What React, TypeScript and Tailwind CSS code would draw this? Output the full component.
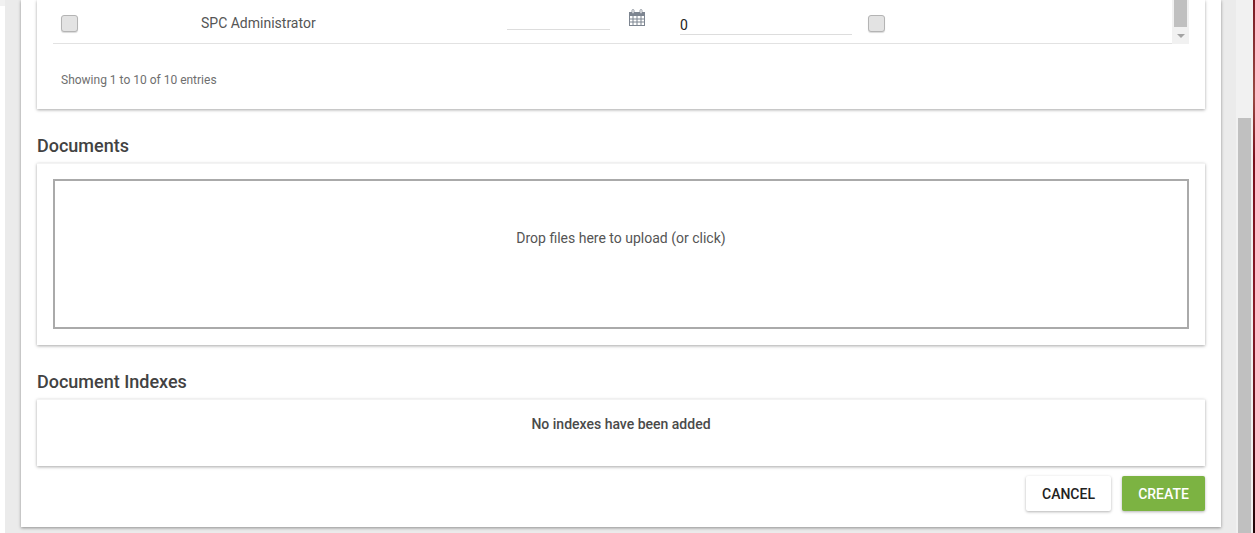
const FONT = "font-['Roboto',sans-serif]";

function Checkbox() {
  return <div className="w-[17px] h-[17px] shrink-0 rounded-[3px] border border-[#b4b4b4] bg-[#e3e3e3] shadow-[0_1px_1px_rgba(0,0,0,0.15)]" />;
}

function CalendarIcon() {
  return (
    <svg width="16" height="17" viewBox="0 0 16 17" className="text-[#7d8590]">
      <rect x="0.5" y="3.5" width="15" height="13" fill="#fff" stroke="currentColor" />
      <rect x="0" y="3" width="16" height="4" fill="currentColor" />
      <path d="M0.5 10h15M0.5 13h15M4 7v9M8 7v9M12 7v9" stroke="currentColor" strokeWidth="1" fill="none" />
      <rect x="3" y="0.5" width="2" height="4" rx="1" fill="#fff" stroke="currentColor" strokeWidth="0.8" />
      <rect x="11" y="0.5" width="2" height="4" rx="1" fill="#fff" stroke="currentColor" strokeWidth="0.8" />
    </svg>
  );
}

function Card({ className, children }: { className: string; children?: React.ReactNode }) {
  return <div className={`bg-white border-t border-[#f3f3f3] shadow-[0_1px_3px_rgba(0,0,0,0.35)] ${className}`}>{children}</div>;
}

function Heading({ children }: { children: string }) {
  return <h2 className="text-[18px] leading-[20px] font-medium text-[#424242]">{children}</h2>;
}

export default function App() {
  return (
    <div className={`${FONT} w-[1255px] h-[533px] overflow-hidden flex bg-white`}>
      <div className="w-[5px] shrink-0">
        <div className="h-[6px] bg-[#f1f1f1]" />
      </div>
      <div className="flex-1 flex bg-[#ebebeb] pl-4">
        {/* Main panel */}
        <div className="w-[1200px] h-[527px] bg-white shadow-[0_1px_3px_rgba(0,0,0,0.4)] px-4 shrink-0">
          <Card className="h-[109px] !border-t-0 px-4">
            <div className="flex h-[44px] border-b border-[#e2e2e2]">
              <div className="w-[148px] pl-2 pt-[15px]"><Checkbox /></div>
              <div className="w-[306px] pt-[14px] text-[14px] leading-[18px] text-[#555]">SPC Administrator</div>
              <div className="w-[103px] h-[30px] border-b border-[#ddd]" />
              <div className="ml-[19px] pt-[9px]"><CalendarIcon /></div>
              <div className="ml-[35px] w-[172px] h-[35px] border-b border-[#ddd] pt-4 text-[14px] leading-[18px] text-[#222]">0</div>
              <div className="ml-4 pt-[15px]"><Checkbox /></div>
              {/* Table scrollbar */}
              <div className="ml-auto w-[17px] -mb-px bg-[#f1f1f1] flex flex-col items-center">
                <div className="w-[13px] h-[27px] bg-[#c0c0c0]" />
                <div className="mt-[7px] w-0 h-0 border-x-[4px] border-x-transparent border-t-[4px] border-t-[#a3a3a3]" />
              </div>
            </div>
            <p className="mt-[28px] pl-2 text-[12px] leading-[16px] text-[#6f6f6f]">Showing 1 to 10 of 10 entries</p>
          </Card>

          <div className="mt-[27px] mb-[7px]"><Heading>Documents</Heading></div>
          <Card className="h-[182px] pt-[15px] px-4">
            <div className="h-[150px] border-2 border-[#aaaaaa] flex items-center justify-center pb-[32px] text-[14px] text-[#555]">
              Drop files here to upload (or click)
            </div>
          </Card>

          <div className="mt-[27px] mb-[7px]"><Heading>Document Indexes</Heading></div>
          <Card className="h-[67px] pt-[15px] text-center text-[14px] leading-[18px] font-medium text-[#4a4a4a]">
            No indexes have been added
          </Card>

          <div className="mt-[10px] flex justify-end gap-[11px]">
            <button className="w-[85px] h-[35px] pt-px rounded-[2px] bg-white text-[14px] font-medium text-[#222] shadow-[0_1px_3px_rgba(0,0,0,0.3)]">CANCEL</button>
            <button className="w-[83px] h-[35px] pt-px rounded-[2px] bg-[#7cb342] text-[14px] font-medium text-white shadow-[0_1px_3px_rgba(0,0,0,0.3)]">CREATE</button>
          </div>
        </div>

        <div className="flex-1" />
        {/* Page scrollbar */}
        <div className="w-[17px] shrink-0 bg-[#f1f1f1] pl-[2px]">
          <div className="mt-[118px] w-[13px] h-[415px] bg-[#c0c0c0]" />
        </div>
      </div>
      <div className="w-[2px] shrink-0 bg-[linear-gradient(180deg,#7a1a24_0%,#9a4a44_18%,#7a0f1c_30%,#8a1a28_60%,#5a0f18_80%,#1f0508_100%)]" />
    </div>
  );
}
